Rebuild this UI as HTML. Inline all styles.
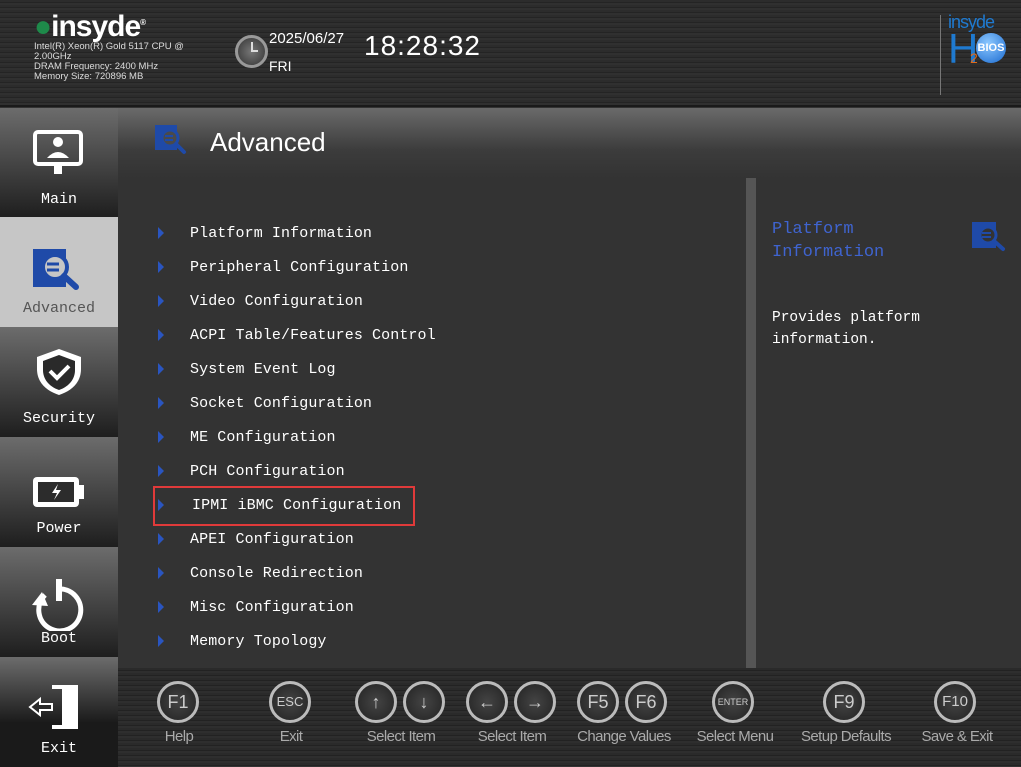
<!DOCTYPE html>
<html><head><meta charset="utf-8"><style>
*{margin:0;padding:0;box-sizing:border-box}
body{width:1021px;height:766px;background:#333;position:relative;overflow:hidden;font-family:"Liberation Mono",monospace;color:#fff}
.abs{position:absolute}
#hdr{left:0;top:0;width:1021px;height:107px;background:repeating-linear-gradient(180deg,#2c2c2c 0 2px,#242424 2px 3px,#303030 3px 5px);border-bottom:2px solid #1a1a1a}
.tab{position:absolute;left:0;width:118px;height:110px;background:linear-gradient(#6c6c6c,#1e1e1e);text-align:center;font-size:15px;color:#fff}
.tab span{position:absolute;left:0;right:0;bottom:10px}
.tab svg{position:absolute;left:33px;top:20px}
#title{left:118px;top:108px;width:903px;height:70px;background:linear-gradient(#6a6a6a,#3c3c3c 60%,#333)}
.item{position:absolute;left:190px;font-size:15px;letter-spacing:0.1px}
.arr{position:absolute;left:158px;width:0;height:0;border-top:6px solid transparent;border-bottom:6px solid transparent;border-left:6px solid #2a55c0}
#foot{left:118px;top:668px;width:903px;height:98px;background:repeating-linear-gradient(180deg,#2a2a2a 0 2px,#222 2px 3px,#2e2e2e 3px 5px)}
.key{position:absolute;top:681px;width:42px;height:42px;border-radius:50%;border:3px solid #bbb;background:radial-gradient(#444,#222);color:#ccc;font-family:"Liberation Sans",sans-serif;font-size:18px;text-align:center;line-height:36px}
.kl{position:absolute;top:728px;font-family:"Liberation Sans",sans-serif;font-size:15px;color:#aaa;letter-spacing:-0.6px;white-space:nowrap;transform:translateX(-50%)}
</style></head><body>
<div id="hdr" class="abs"></div>
<div class="abs" style="left:34px;top:10px;font:bold 30px 'Liberation Sans',sans-serif;color:#fff;letter-spacing:-1px"><span style="color:#1e8a4a">●</span>insyde<sup style="font-size:8px">®</sup></div>
<div class="abs" style="left:34px;top:42px;font:9.5px/10px 'Liberation Sans',sans-serif;color:#ddd">Intel(R) Xeon(R) Gold 5117 CPU @<br>2.00GHz<br>DRAM Frequency: 2400 MHz<br>Memory Size: 720896 MB</div>
<div class="abs" style="left:235px;top:35px;width:33px;height:33px;border-radius:50%;background:radial-gradient(#777,#333);border:3px solid #999"></div>
<div class="abs" style="left:251px;top:42px;width:2px;height:10px;background:#ddd"></div>
<div class="abs" style="left:251px;top:50px;width:7px;height:2px;background:#ddd"></div>
<div class="abs" style="left:269px;top:30px;font:15px 'Liberation Sans',sans-serif">2025/06/27</div>
<div class="abs" style="left:269px;top:58px;font:14px 'Liberation Sans',sans-serif">FRI</div>
<div class="abs" style="left:364px;top:30px;font:28px 'Liberation Sans',sans-serif;letter-spacing:1px">18:28:32</div>
<div class="abs" style="left:940px;top:15px;width:1px;height:80px;background:#777"></div>
<div class="abs" style="left:948px;top:12px;font:18px 'Liberation Sans',sans-serif;color:#1f7ad0;letter-spacing:-1px">insyde</div>
<div class="abs" style="left:948px;top:25px;font:42px 'Liberation Sans',sans-serif;color:#1f7ad0">H</div>
<div class="abs" style="left:976px;top:33px;width:30px;height:30px;border-radius:50%;background:radial-gradient(circle at 40% 35%,#8cc8ff,#1a6ad0);font:bold 11px/30px 'Liberation Sans',sans-serif;text-align:center">BIOS</div>
<div class="abs" style="left:970px;top:50px;font:14px 'Liberation Sans',sans-serif;color:#e06a1a">2</div>

<div class="tab" style="top:108px"><svg width="52" height="50" viewBox="0 0 52 50"><rect x="2" y="4" width="46" height="32" rx="3" fill="none" stroke="#fff" stroke-width="4"/><circle cx="25" cy="14" r="5" fill="#fff"/><path d="M14 30q11-12 22 0z" fill="#fff"/><rect x="21" y="38" width="8" height="8" fill="#fff"/></svg><span>Main</span></div>
<div class="tab" style="top:217px;background:#c6c6c6;color:#555"><svg width="52" height="50" viewBox="0 0 52 50" style="top:30px"><rect x="0" y="2" width="33" height="38" fill="#1f4aa8"/><circle cx="22" cy="20" r="12" fill="#c6c6c6" stroke="#1f4aa8" stroke-width="4"/><path d="M31 29l12 11" stroke="#1f4aa8" stroke-width="6" stroke-linecap="round"/><path d="M14 17h12M14 23h12" stroke="#1f4aa8" stroke-width="3"/></svg><span>Advanced</span></div>
<div class="tab" style="top:327px"><svg width="52" height="50" viewBox="0 0 52 50" style="left:35px"><path d="M24 2l22 8v12c0 14-10 22-22 26C12 44 2 36 2 22V10z" fill="#fff"/><path d="M24 8l16 6v9c0 10-7 17-16 20C15 40 8 33 8 23v-9z" fill="#2a2a2a"/><path d="M15 24l7 7 12-12" stroke="#fff" stroke-width="4" fill="none"/></svg><span>Security</span></div>
<div class="tab" style="top:437px"><svg width="56" height="50" viewBox="0 0 56 50" style="left:31px;top:38px"><rect x="2" y="2" width="46" height="30" rx="4" fill="#fff"/><rect x="7" y="7" width="36" height="20" fill="#2c2c2c"/><rect x="48" y="10" width="5" height="14" fill="#fff"/><path d="M27 9l-6 9h5l-3 7 7-10h-5z" fill="#fff"/></svg><span>Power</span></div>
<div class="tab" style="top:547px"><svg width="60" height="54" viewBox="0 0 60 54" style="left:29px;top:30px"><path d="M16 18a21 21 0 1 0 13-6" stroke="#fff" stroke-width="5" fill="none"/><path d="M3 28l10-13 6 14z" fill="#fff"/><rect x="27" y="2" width="6" height="22" fill="#fff"/></svg><span>Boot</span></div>
<div class="tab" style="top:657px;background:linear-gradient(#6c6c6c,#1a1a1a 60%)"><svg width="60" height="50" viewBox="0 0 60 50" style="left:28px;top:26px"><path d="M24 4h24v40H24" stroke="#fff" stroke-width="4" fill="none"/><path d="M34 6l14-2v42l-14-4z" fill="#fff"/><path d="M2 24l10-8v5h12v6H12v5z" stroke="#fff" stroke-width="2" fill="#2a2a2a"/></svg><span>Exit</span></div>

<div id="title" class="abs"></div>
<svg class="abs" style="left:155px;top:125px" width="34" height="30" viewBox="0 0 34 30"><rect x="0" y="0" width="22" height="25" fill="#1f4aa8"/><circle cx="15" cy="13" r="8" fill="#4a4a4a" stroke="#1f4aa8" stroke-width="3"/><path d="M21 19l8 8" stroke="#1f4aa8" stroke-width="4" stroke-linecap="round"/><path d="M10 11h8M10 15h8" stroke="#1f4aa8" stroke-width="2"/></svg>
<div class="abs" style="left:210px;top:127px;font-size:26px;font-family:'Liberation Sans',sans-serif">Advanced</div>

<div class="abs" style="left:746px;top:178px;width:10px;height:490px;background:#555"></div>

<div class="arr" style="top:227px"></div><div class="item" style="top:225px">Platform Information</div>
<div class="arr" style="top:261px"></div><div class="item" style="top:259px">Peripheral Configuration</div>
<div class="arr" style="top:295px"></div><div class="item" style="top:293px">Video Configuration</div>
<div class="arr" style="top:329px"></div><div class="item" style="top:327px">ACPI Table/Features Control</div>
<div class="arr" style="top:363px"></div><div class="item" style="top:361px">System Event Log</div>
<div class="arr" style="top:397px"></div><div class="item" style="top:395px">Socket Configuration</div>
<div class="arr" style="top:431px"></div><div class="item" style="top:429px">ME Configuration</div>
<div class="arr" style="top:465px"></div><div class="item" style="top:463px">PCH Configuration</div>
<div class="abs" style="left:153px;top:486px;width:262px;height:40px;border:2px solid #e03a3a"></div>
<div class="arr" style="top:499px"></div><div class="item" style="top:497px;left:192px">IPMI iBMC Configuration</div>
<div class="arr" style="top:533px"></div><div class="item" style="top:531px">APEI Configuration</div>
<div class="arr" style="top:567px"></div><div class="item" style="top:565px">Console Redirection</div>
<div class="arr" style="top:601px"></div><div class="item" style="top:599px">Misc Configuration</div>
<div class="arr" style="top:635px"></div><div class="item" style="top:633px">Memory Topology</div>

<div class="abs" style="left:772px;top:218px;font-size:17px;line-height:23px;color:#3f64d0">Platform<br>Information</div>
<svg class="abs" style="left:972px;top:222px" width="36" height="30" viewBox="0 0 36 30"><rect x="0" y="0" width="24" height="26" fill="#1f4aa8"/><circle cx="16" cy="13" r="8" fill="#333" stroke="#1f4aa8" stroke-width="3"/><path d="M22 19l9 8" stroke="#1f4aa8" stroke-width="4" stroke-linecap="round"/><path d="M10 11h9M10 15h9" stroke="#1f4aa8" stroke-width="2"/></svg>
<div class="abs" style="left:772px;top:307px;font-size:14.5px;line-height:22px">Provides platform<br>information.</div>

<div id="foot" class="abs"></div>
<div class="key" style="left:157px">F1</div><div class="kl" style="left:179px">Help</div>
<div class="key" style="left:269px;font-size:13px">ESC</div><div class="kl" style="left:291px">Exit</div>
<div class="key" style="left:355px;font-weight:bold">↑</div><div class="key" style="left:403px;font-weight:bold">↓</div><div class="kl" style="left:401px">Select Item</div>
<div class="key" style="left:466px;font-weight:bold">←</div><div class="key" style="left:514px;font-weight:bold">→</div><div class="kl" style="left:512px">Select Item</div>
<div class="key" style="left:577px">F5</div><div class="key" style="left:625px">F6</div><div class="kl" style="left:624px">Change Values</div>
<div class="key" style="left:712px;font-size:9px">ENTER</div><div class="kl" style="left:735px">Select Menu</div>
<div class="key" style="left:823px">F9</div><div class="kl" style="left:846px">Setup Defaults</div>
<div class="key" style="left:934px;font-size:15px">F10</div><div class="kl" style="left:957px">Save &amp; Exit</div>
</body></html>
